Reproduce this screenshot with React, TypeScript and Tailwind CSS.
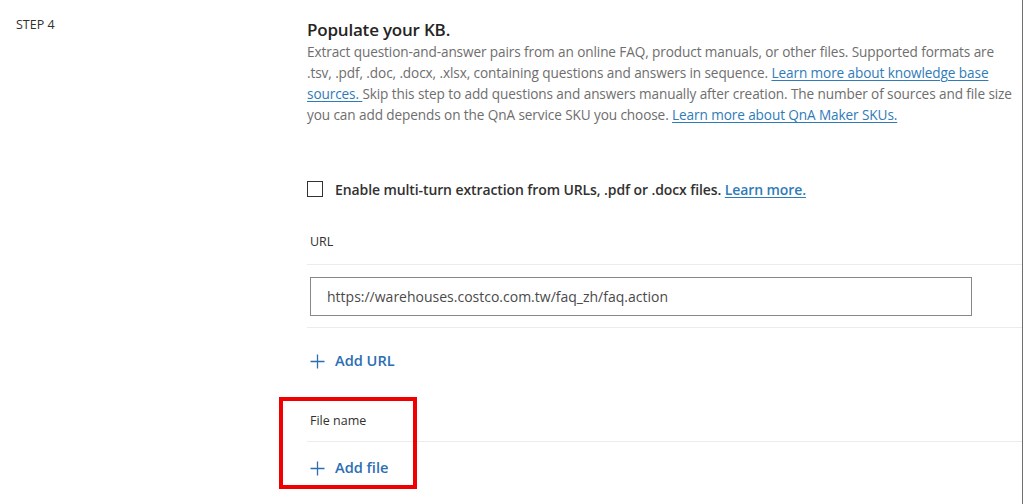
import React from 'react'

const font = { fontFamily: '"Open Sans", "Noto Sans", sans-serif' }

function Plus() {
  return (
    <svg width="15" height="15" viewBox="0 0 15 15" fill="none" stroke="currentColor" strokeWidth="1.3">
      <path d="M7.5 0.5v14M0.5 7.5h14" />
    </svg>
  )
}

export default function App() {
  return (
    <div
      className="w-[1024px] h-[504px] flex bg-white text-[#323130] overflow-hidden"
      style={font}
    >
      {/* step label */}
      <div className="w-[307px] shrink-0 pl-4 pt-[16px]">
        <div className="text-[12.5px] font-medium text-[#323130]">STEP 4</div>
      </div>

      {/* content */}
      <div className="w-[716px] border-r border-[#6f6f6f] flex flex-col">
        <h2 className="mt-[19px] text-[17px] font-semibold leading-[22px] text-[#252423] tracking-[-0.2px]">
          Populate your KB.
        </h2>
        <p className="text-[13.6px] leading-[21px] text-[#6e6e6e] tracking-[-0.1px] whitespace-nowrap">
          Extract question-and-answer pairs from an online FAQ, product manuals, or other files. Supported formats are
          <br />
          .tsv, .pdf, .doc, .docx, .xlsx, containing questions and answers in sequence.{' '}
          <a className="text-[#2f7bb8] underline underline-offset-2">
            Learn more about knowledge base
            <br />
            sources.{' '}
          </a>
          Skip this step to add questions and answers manually after creation. The number of sources and file size
          <br />
          you can add depends on the QnA service SKU you choose.{' '}
          <a className="text-[#2f7bb8] underline underline-offset-2">Learn more about QnA Maker SKUs.</a>
        </p>

        <label className="mt-[54px] flex items-center gap-[12px] h-[20px]">
          <span className="w-[16px] h-[16px] border border-[#323130] bg-white shrink-0" />
          <span className="text-[14px] font-semibold text-[#323130] tracking-[-0.1px]">
            Enable multi-turn extraction from URLs, .pdf or .docx files.{' '}
            <a className="text-[#2f7bb8] underline underline-offset-2">Learn more.</a>
          </span>
        </label>

        <div className="mt-[34px] pl-[3px] text-[12.5px] leading-[18px] text-[#323130]">URL</div>
        <div className="mt-[13px] border-t border-[#ececec]" />

        <div className="pt-[12px] pb-[11px] pl-[3px] pr-[50px]">
          <div className="h-[39px] border border-[#8a8886] flex items-center pl-[16px] text-[14px] text-[#4a4a4a]">
            https://warehouses.costco.com.tw/faq_zh/faq.action
          </div>
        </div>
        <div className="border-t border-[#ececec]" />

        <div className="mt-[23px] pl-[3px] flex items-center gap-[10px] text-[#2b6eb4] h-[20px]">
          <Plus />
          <span className="text-[14.6px] font-semibold">Add URL</span>
        </div>

        {/* file section, highlighted */}
        <div className="mt-[26px] relative">
          <div className="pl-[3px] text-[12.5px] font-medium leading-[18px] text-[#323130] pt-[15px]">File name</div>
          <div className="mt-[11px] border-t border-[#ececec]" />
          <div className="mt-[16px] pl-[3px] flex items-center gap-[10px] text-[#2b6eb4] h-[20px]">
            <Plus />
            <span className="text-[14.6px] font-semibold">Add file</span>
          </div>
          <div className="absolute left-[-28px] top-[0px] w-[138px] h-[92px] border-[4px] border-[#f00000]" />
        </div>
      </div>
    </div>
  )
}
